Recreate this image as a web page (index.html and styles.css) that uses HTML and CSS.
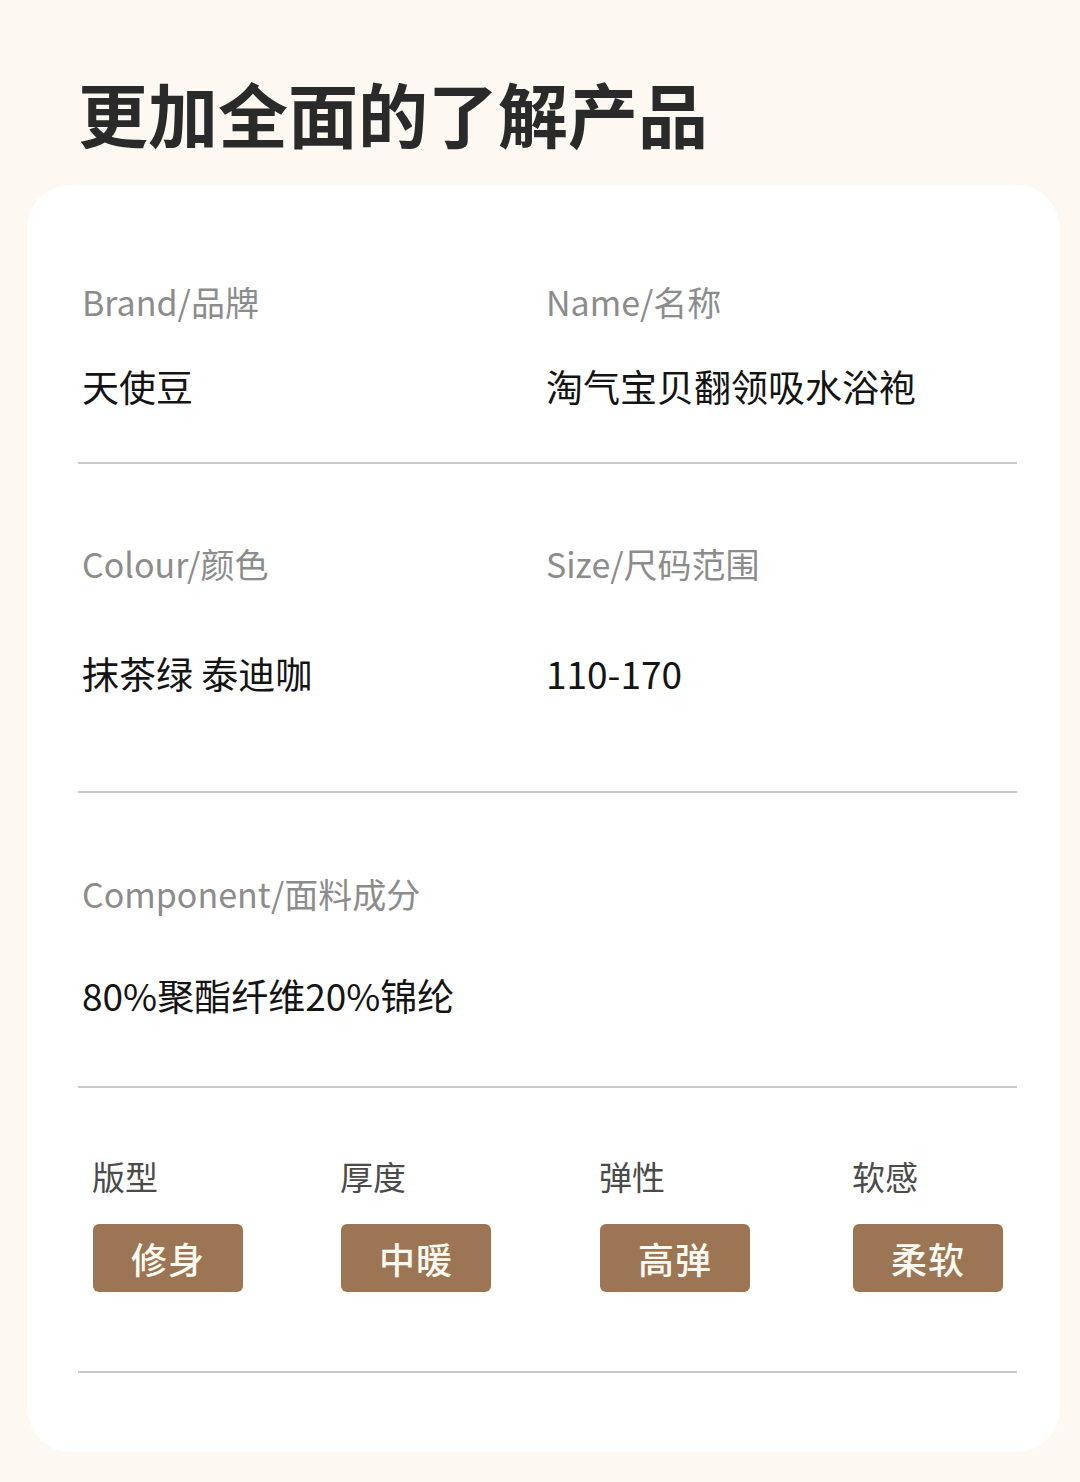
FILE: index.html
```html
<!DOCTYPE html>
<html lang="zh-CN">
<head>
<meta charset="utf-8">
<title>更加全面的了解产品</title>
<link rel="stylesheet" href="styles.css">
</head>
<body>
<div class="page">
  <h1 class="title">更加全面的了解产品</h1>
  <div class="card">
    <div class="section s1">
      <div class="grid">
        <div class="cell"><div class="label">Brand/品牌</div><div class="value">天使豆</div></div>
        <div class="cell"><div class="label">Name/名称</div><div class="value">淘气宝贝翻领吸水浴袍</div></div>
      </div>
    </div>
    <div class="section s2">
      <div class="grid">
        <div class="cell"><div class="label">Colour/颜色</div><div class="value">抹茶绿 泰迪咖</div></div>
        <div class="cell"><div class="label">Size/尺码范围</div><div class="value">110-170</div></div>
      </div>
    </div>
    <div class="section s3">
      <div class="grid">
        <div class="cell"><div class="label">Component/面料成分</div><div class="value">80%聚酯纤维20%锦纶</div></div>
      </div>
    </div>
    <div class="section s4">
      <div class="attrs">
        <div class="attr"><div class="attr-label">版型</div><div class="badge">修身</div></div>
        <div class="attr"><div class="attr-label">厚度</div><div class="badge">中暖</div></div>
        <div class="attr"><div class="attr-label">弹性</div><div class="badge">高弹</div></div>
        <div class="attr"><div class="attr-label">软感</div><div class="badge">柔软</div></div>
      </div>
    </div>
  </div>
</div>
</body>
</html>
```

FILE: styles.css
```css
html, body {
  margin: 0;
  padding: 0;
  background: #fdf8f2;
}
body {
  font-family: "Noto Sans CJK SC", "Noto Sans", sans-serif;
  width: 1080px;
  height: 1482px;
  overflow: hidden;
}
.page {
  padding: 73px 20px 0 27px;
}
.title {
  margin: 0 0 32px 51px;
  font-size: 70px;
  line-height: 80px;
  font-weight: 700;
  color: #2a2a2a;
}
.card {
  background: #ffffff;
  border-radius: 44px;
  padding: 0 43px 79px 51px;
}
.section {
  border-bottom: 2px solid #c9c9c9;
}
.s1 { padding: 97px 0 52px; }
.s2 { padding: 80px 0 94px; }
.s3 { padding: 81px 0 67px; }
.s4 { padding: 68px 0 79px; }
.grid {
  display: grid;
  grid-template-columns: 464px 1fr;
}
.cell {
  padding-left: 4px;
}
.label {
  font-size: 34px;
  line-height: 40px;
  color: #8c8c8c;
}
.value {
  font-size: 37px;
  line-height: 48px;
  color: #141414;
}
.s1 .value { margin-top: 40px; }
.s2 .value { margin-top: 65px; }
.s3 .value { margin-top: 57px; }
.attrs {
  display: grid;
  grid-template-columns: 248px 259px 253px 1fr;
  padding-left: 14px;
}
.attr-label {
  font-size: 33px;
  line-height: 40px;
  color: #4b4b4b;
}
.badge {
  margin-top: 28px;
  margin-left: 1px;
  width: 150px;
  height: 68px;
  border-radius: 6px;
  background: #9c7554;
  color: #fffaf2;
  font-size: 36px;
  line-height: 68px;
  font-weight: 500;
  text-align: center;
  letter-spacing: 1px;
}
```
